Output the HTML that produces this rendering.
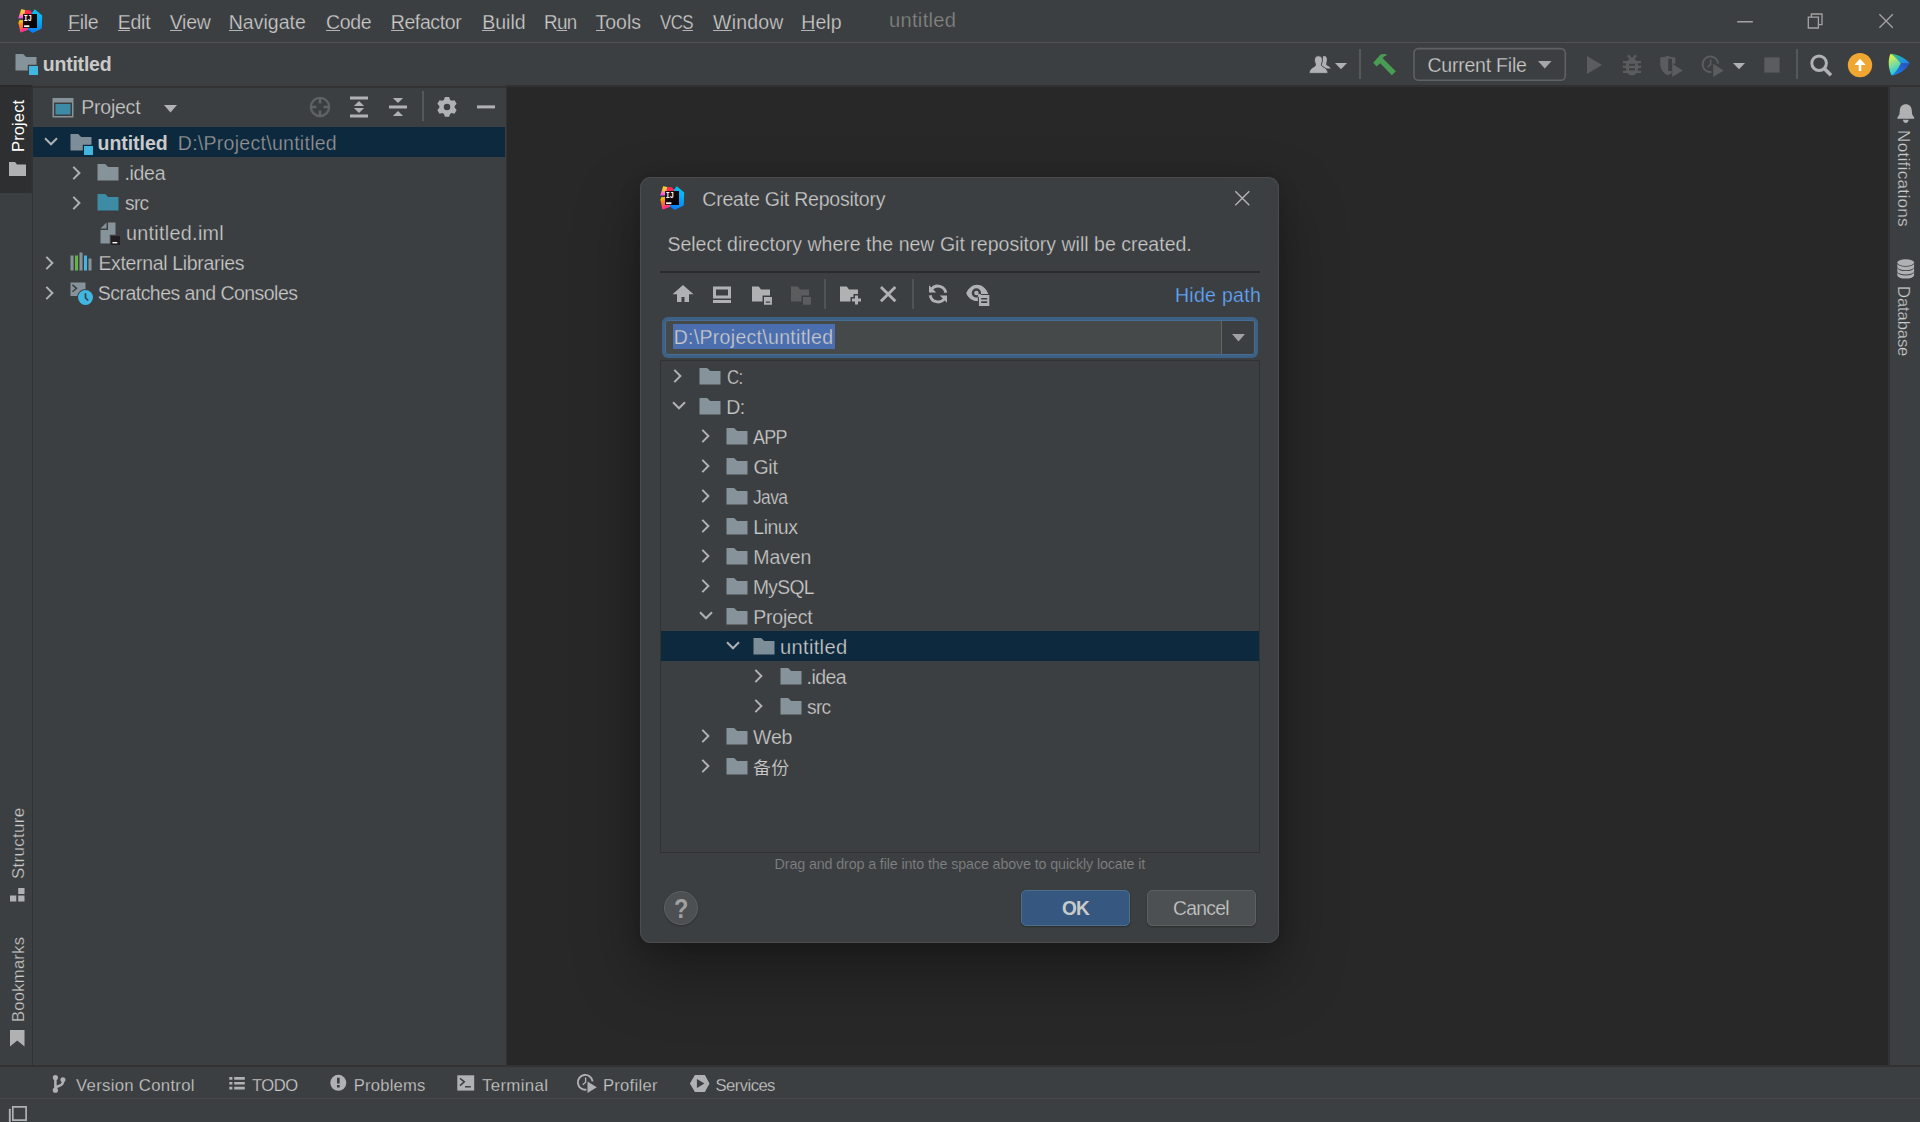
<!DOCTYPE html>
<html lang="en"><head><meta charset="utf-8"><title>untitled</title>
<style>
html,body{margin:0;padding:0;}
body{width:1920px;height:1122px;overflow:hidden;background:#3c3f41;font-family:'Liberation Sans','Noto Sans CJK SC',sans-serif;position:relative;}
#r{position:absolute;left:0;top:0;width:1920px;height:1122px;overflow:hidden;}
#r div,#r svg,#r span.t{position:absolute;}
#r div{box-sizing:border-box;}
span.t{line-height:1;white-space:pre;}
span.t u{text-decoration:none;background:linear-gradient(#b4b4b4,#b4b4b4) 0 calc(0.905em + 1px)/100% 1px no-repeat;}
svg{overflow:visible;}
svg text{font-family:'Liberation Mono',monospace;}
</style></head><body><div id="r">
<div style="left:0px;top:42px;width:1920px;height:1px;background:#515151;"></div>
<div style="left:0px;top:85px;width:1920px;height:2px;background:#323232;"></div>
<div style="left:33px;top:85px;width:473px;height:1px;background:#3c3f41;"></div>
<div style="left:33px;top:86px;width:473px;height:2px;background:#323232;"></div>
<div style="left:0px;top:85px;width:32px;height:2px;background:#2a2a2a;"></div>
<div style="left:507px;top:87px;width:1381px;height:978px;background:#282828;"></div>
<div style="left:506px;top:87px;width:1px;height:978px;background:#313131;"></div>
<div style="left:507px;top:85px;width:1381px;height:2px;background:#313131;"></div>
<div style="left:32px;top:87px;width:1px;height:978px;background:#323232;"></div>
<div style="left:0px;top:87px;width:31px;height:106px;background:#2d2f30;"></div>
<div style="left:31px;top:87px;width:1px;height:106px;background:#303233;"></div>
<div style="left:1888px;top:87px;width:2px;height:978px;background:#323232;"></div>
<div style="left:1887px;top:87px;width:1px;height:978px;background:#272727;"></div>
<div style="left:0px;top:1065px;width:1920px;height:2px;background:#323232;"></div>
<div style="left:0px;top:1098px;width:1920px;height:1px;background:#474746;"></div>
<svg style="left:18px;top:9px;" width="24" height="24" viewBox="0 0 24 24">
<defs>
<linearGradient id="lg1_18" x1="0.3" y1="0" x2="0.2" y2="1"><stop offset="0" stop-color="#fdd835"/><stop offset="0.45" stop-color="#fdb052"/><stop offset="0.8" stop-color="#ff5fd8"/><stop offset="1" stop-color="#f04bdc"/></linearGradient>
<linearGradient id="lg2_18" x1="0.6" y1="0" x2="0.4" y2="1"><stop offset="0" stop-color="#07c3f2"/><stop offset="0.35" stop-color="#0ab0f8"/><stop offset="1" stop-color="#087cfa"/></linearGradient>
<linearGradient id="lg3_18" x1="0.3" y1="0" x2="0.5" y2="1"><stop offset="0" stop-color="#fdd20d"/><stop offset="0.35" stop-color="#fc801d"/><stop offset="0.75" stop-color="#fe4a6a"/><stop offset="1" stop-color="#ff318c"/></linearGradient>
<linearGradient id="lg4_18" x1="0" y1="0" x2="1" y2="1"><stop offset="0" stop-color="#2a0e0a"/><stop offset="0.6" stop-color="#0a0508"/><stop offset="1" stop-color="#000"/></linearGradient>
</defs>
<path d="M3.2 0.2L7.4 0.9L8 6L5.4 9.2L0.2 9.6Z" fill="url(#lg1_18)"/>
<path d="M7.2 1L12 1.2L14.2 4.2L10 7L6.5 5Z" fill="#fe2857"/>
<path d="M0.4 13.8L1.4 11.2L6 11L10.5 20.5L2.4 23.6Z" fill="url(#lg3_18)"/>
<path d="M2.4 23.6L4.4 19.4L10.5 20.5Z" fill="#ff318c"/>
<path d="M16.7 0.2L24.2 6.4L23.7 19.6L14.6 24L10 20.5L14 4Z" fill="url(#lg2_18)"/>
<rect x="5" y="5" width="14" height="14" fill="url(#lg4_18)"/>
<rect x="6.1" y="16.3" width="5.3" height="1.8" fill="#fff"/>
<text transform="translate(5.7 12.15) scale(0.74 1)" font-size="9.3" font-weight="700" fill="#fff" style="font-family:'Liberation Mono',monospace">IJ</text>
</svg>
<span class="t" style="font-size:19.5px;color:#cacaca;letter-spacing:-0.267px;-webkit-text-stroke:0.25px #3c3f41;left:68.00px;top:13.00px;"><u>F</u>ile</span>
<span class="t" style="font-size:19.5px;color:#cacaca;letter-spacing:-0.233px;-webkit-text-stroke:0.25px #3c3f41;left:117.70px;top:13.00px;"><u>E</u>dit</span>
<span class="t" style="font-size:19.5px;color:#cacaca;letter-spacing:-0.233px;-webkit-text-stroke:0.25px #3c3f41;left:169.70px;top:13.00px;"><u>V</u>iew</span>
<span class="t" style="font-size:19.5px;color:#cacaca;letter-spacing:0.014px;-webkit-text-stroke:0.25px #3c3f41;left:228.70px;top:13.00px;"><u>N</u>avigate</span>
<span class="t" style="font-size:19.5px;color:#cacaca;letter-spacing:-0.333px;-webkit-text-stroke:0.25px #3c3f41;left:326.00px;top:13.00px;"><u>C</u>ode</span>
<span class="t" style="font-size:19.5px;color:#cacaca;letter-spacing:-0.386px;-webkit-text-stroke:0.25px #3c3f41;left:390.70px;top:13.00px;"><u>R</u>efactor</span>
<span class="t" style="font-size:19.5px;color:#cacaca;letter-spacing:0.025px;-webkit-text-stroke:0.25px #3c3f41;left:482.20px;top:13.00px;"><u>B</u>uild</span>
<span class="t" style="font-size:19.5px;color:#cacaca;letter-spacing:-0.700px;-webkit-text-stroke:0.25px #3c3f41;left:544.04px;top:13.00px;transform-origin:0 0;transform:scaleX(0.9632);">R<u>u</u>n</span>
<span class="t" style="font-size:19.5px;color:#cacaca;-webkit-text-stroke:0.25px #3c3f41;left:595.50px;top:13.00px;"><u>T</u>ools</span>
<span class="t" style="font-size:19.5px;color:#cacaca;letter-spacing:-0.700px;-webkit-text-stroke:0.25px #3c3f41;left:660.30px;top:13.00px;transform-origin:0 0;transform:scaleX(0.8653);">VC<u>S</u></span>
<span class="t" style="font-size:19.5px;color:#cacaca;letter-spacing:0.180px;-webkit-text-stroke:0.25px #3c3f41;left:713.10px;top:13.00px;"><u>W</u>indow</span>
<span class="t" style="font-size:19.5px;color:#cacaca;letter-spacing:0.100px;-webkit-text-stroke:0.25px #3c3f41;left:801.20px;top:13.00px;"><u>H</u>elp</span>
<span class="t" style="font-size:19.5px;color:#858585;letter-spacing:0.300px;-webkit-text-stroke:0.25px #3c3f41;left:888.70px;top:11.00px;transform-origin:0 0;transform:scaleX(1.0307);">untitled</span>
<svg style="left:1737px;top:20px;" width="16" height="4" viewBox="0 0 16 4"><rect x="0.2" y="1" width="15.6" height="1.5" fill="#a3a3a3"/></svg>
<svg style="left:1806px;top:13px;" width="18" height="17" viewBox="0 0 18 17"><path d="M2.3 4.1H12.4V15H2.3Z M5.4 4.1V1H16V11.6H12.4" fill="none" stroke="#a3a3a3" stroke-width="1.3"/></svg>
<svg style="left:1879px;top:14px;" width="15" height="15" viewBox="0 0 15 15"><path d="M0.4 0.3L13.8 13.8M13.8 0.3L0.4 13.8" fill="none" stroke="#a3a3a3" stroke-width="1.3"/></svg>
<svg style="left:14px;top:51px;" width="24" height="24" viewBox="0 0 16 16"><path d="M1 2H6.1L8.1 4H15V9.2H9.2V13H1Z" fill="#87939a"/><rect x="10" y="10" width="6" height="6" fill="#40b6e0"/></svg>
<span class="t" style="font-size:19.5px;color:#cacaca;letter-spacing:-0.229px;font-weight:700;left:42.80px;top:55.00px;">untitled</span>
<span class="t" style="font-size:16.6px;color:#ffffff;letter-spacing:0.083px;left:11.00px;top:152.20px;transform-origin:0 0;transform:rotate(-90deg);">Project</span>
<svg style="left:9px;top:162px;" width="17" height="14" viewBox="0 0 17 14"><path d="M0 0H6L8 2.5H17V14H0Z" fill="#afb1b3"/></svg>
<span class="t" style="font-size:16.6px;color:#cacaca;letter-spacing:0.300px;-webkit-text-stroke:0.25px #3c3f41;left:11.00px;top:879.22px;transform-origin:0 0;transform:rotate(-90deg) scaleX(1.0205);">Structure</span>
<svg style="left:10px;top:888px;" width="15" height="14" viewBox="0 0 15 14"><path d="M8.2 0H14.5V6H8.2Z M0 7.5H6.3V13.5H0Z M8.2 7.5H14.5V13.5H8.2Z" fill="#afb1b3"/></svg>
<span class="t" style="font-size:16.6px;color:#cacaca;letter-spacing:0.250px;-webkit-text-stroke:0.25px #3c3f41;left:11.00px;top:1022.00px;transform-origin:0 0;transform:rotate(-90deg);">Bookmarks</span>
<svg style="left:10px;top:1030px;" width="15" height="17" viewBox="0 0 15 17"><path d="M0 0H14.5V16.5L7.25 10.5L0 16.5Z" fill="#afb1b3"/></svg>
<span class="t" style="font-size:16.6px;color:#cacaca;letter-spacing:0.300px;-webkit-text-stroke:0.25px #3c3f41;left:1910.80px;top:129.77px;transform-origin:0 0;transform:rotate(90deg) scaleX(1.0281);">Notifications</span>
<span class="t" style="font-size:16.6px;color:#cacaca;letter-spacing:-0.100px;-webkit-text-stroke:0.25px #3c3f41;left:1910.80px;top:285.90px;transform-origin:0 0;transform:rotate(90deg);">Database</span>
<svg style="left:51px;top:95px;" width="24" height="24" viewBox="0 0 16 16"><path d="M1 2H15V15H1Z M2 5V14H14V5Z" fill="#87939a" fill-rule="evenodd"/><rect x="3" y="6" width="10" height="7" fill="#3d8ba5"/></svg>
<span class="t" style="font-size:19.5px;color:#cacaca;letter-spacing:-0.217px;-webkit-text-stroke:0.25px #3c3f41;left:81.20px;top:97.80px;">Project</span>
<svg style="left:164.2px;top:104.8px;" width="13" height="7.5" viewBox="0 0 13 7.5"><path d="M0 0H13L6.5 7.5Z" fill="#afb1b3"/></svg>
<svg style="left:308px;top:95px;" width="24" height="24" viewBox="0 0 16 16"><circle cx="8" cy="7.95" r="6.1" fill="none" stroke="#606365" stroke-width="1.5"/><path d="M8 1.3V5.6M8 10.3V14.6M1.3 7.95H5.6M10.4 7.95H14.7" stroke="#606365" stroke-width="1.7" fill="none"/></svg>
<svg style="left:347px;top:95px;" width="24" height="24" viewBox="0 0 16 16"><path d="M2 1H14V3H2Z M2 13H14V15H2Z M8 4L11.4 7.4H4.6Z M8 12L4.6 8.6H11.4Z" fill="#afb1b3"/></svg>
<svg style="left:386px;top:95px;" width="24" height="24" viewBox="0 0 16 16"><path d="M2 7H14V9H2Z M8 5.4L4.6 2H11.4Z M8 10.6L11.4 14H4.6Z" fill="#afb1b3"/></svg>
<div style="left:422px;top:91px;width:2px;height:30px;background:#555759;"></div>
<svg style="left:477px;top:105px;" width="18" height="4" viewBox="0 0 18 4"><rect x="0" y="0.4" width="18" height="3" fill="#afb1b3"/></svg>
<div style="left:33px;top:127px;width:472px;height:30px;background:#0d293e;"></div>
<svg style="left:38.699999999999996px;top:129.6px;" width="24" height="24" viewBox="0 0 24 24"><path d="M6 8.3L12 14.3L18 8.3" fill="none" stroke="#afb1b3" stroke-width="2"/></svg>
<svg style="left:69px;top:131px;" width="24" height="24" viewBox="0 0 16 16"><path d="M1 2H6.1L8.1 4H15V9.2H9.2V13H1Z" fill="#7e8e99"/><rect x="10" y="10" width="6" height="6" fill="#40b6e0"/></svg>
<span class="t" style="font-size:19.5px;color:#cacaca;letter-spacing:-0.029px;font-weight:700;left:97.50px;top:134.00px;">untitled</span>
<span class="t" style="font-size:19.5px;color:#939393;letter-spacing:0.278px;-webkit-text-stroke:0.25px #0d293e;left:177.80px;top:134.00px;">D:\Project\untitled</span>
<svg style="left:65.3px;top:160.8px;" width="24" height="24" viewBox="0 0 24 24"><path d="M8.3 5.9L14.4 12L8.3 18.1" fill="none" stroke="#afb1b3" stroke-width="2"/></svg>
<svg style="left:96px;top:161px;" width="24" height="24" viewBox="0 0 16 16"><path d="M1 2H6.1L8.1 4H15V13H1Z" fill="#87939a"/></svg>
<span class="t" style="font-size:19.5px;color:#cacaca;letter-spacing:-0.325px;-webkit-text-stroke:0.25px #3c3f41;left:124.50px;top:164.00px;">.idea</span>
<svg style="left:65.3px;top:190.8px;" width="24" height="24" viewBox="0 0 24 24"><path d="M8.3 5.9L14.4 12L8.3 18.1" fill="none" stroke="#afb1b3" stroke-width="2"/></svg>
<svg style="left:96px;top:191px;" width="24" height="24" viewBox="0 0 16 16"><path d="M1 2H6.1L8.1 4H15V13H1Z" fill="#3d8ba5"/></svg>
<span class="t" style="font-size:19.5px;color:#cacaca;letter-spacing:-0.700px;-webkit-text-stroke:0.25px #3c3f41;left:125.20px;top:194.00px;transform-origin:0 0;transform:scaleX(0.9837);">src</span>
<svg style="left:96px;top:221px;" width="24" height="24" viewBox="0 0 16 16"><path d="M7 1L3 5H7Z" fill="#87939a"/><path d="M8 1H13V9.2H9.2V15H3V6H8Z" fill="#87939a"/><rect x="10" y="10" width="6" height="6" fill="#231f20"/><rect x="11" y="14" width="3.2" height="0.9" fill="#fff"/></svg>
<span class="t" style="font-size:19.5px;color:#cacaca;letter-spacing:0.300px;-webkit-text-stroke:0.25px #3c3f41;left:125.75px;top:224.00px;transform-origin:0 0;transform:scaleX(1.0125);">untitled.iml</span>
<svg style="left:38.3px;top:250.8px;" width="24" height="24" viewBox="0 0 24 24"><path d="M8.3 5.9L14.4 12L8.3 18.1" fill="none" stroke="#afb1b3" stroke-width="2"/></svg>
<svg style="left:69px;top:251px;" width="24" height="24" viewBox="0 0 16 16"><path d="M1 3H3V13H1Z M7 1H9V13H7Z M13 5H15V13H13Z" fill="#87939a"/><rect x="4" y="3" width="2" height="10" fill="#62b543"/><rect x="10" y="3" width="2" height="10" fill="#40b6e0"/></svg>
<span class="t" style="font-size:19.5px;color:#cacaca;letter-spacing:-0.335px;-webkit-text-stroke:0.25px #3c3f41;left:98.40px;top:254.00px;">External Libraries</span>
<svg style="left:38.3px;top:280.8px;" width="24" height="24" viewBox="0 0 24 24"><path d="M8.3 5.9L14.4 12L8.3 18.1" fill="none" stroke="#afb1b3" stroke-width="2"/></svg>
<svg style="left:69px;top:281px;" width="24" height="24" viewBox="0 0 16 16"><path d="M1 1H11V5.4A5.7 5.7 0 0 0 5.4 10H1Z" fill="#87939a"/><path d="M2.3 2.6L5 4.9L2.3 7.2" fill="none" stroke="#3c3f41" stroke-width="1"/><circle cx="11" cy="11" r="5" fill="#40b6e0"/><path d="M11 8.2V11.2L12.8 13" fill="none" stroke="#231f20" stroke-width="1.1" stroke-opacity="0.75"/></svg>
<span class="t" style="font-size:19.5px;color:#cacaca;letter-spacing:-0.533px;-webkit-text-stroke:0.25px #3c3f41;left:97.80px;top:284.00px;">Scratches and Consoles</span>
<span class="t" style="font-size:16.6px;color:#cacaca;letter-spacing:0.300px;-webkit-text-stroke:0.25px #3c3f41;left:75.50px;top:1078.00px;transform-origin:0 0;transform:scaleX(1.0077);">Version Control</span>
<span class="t" style="font-size:16.6px;color:#cacaca;letter-spacing:-0.467px;-webkit-text-stroke:0.25px #3c3f41;left:252.00px;top:1078.00px;">TODO</span>
<span class="t" style="font-size:16.6px;color:#cacaca;letter-spacing:0.200px;-webkit-text-stroke:0.25px #3c3f41;left:353.80px;top:1078.00px;">Problems</span>
<span class="t" style="font-size:16.6px;color:#cacaca;letter-spacing:0.300px;-webkit-text-stroke:0.25px #3c3f41;left:482.20px;top:1078.00px;transform-origin:0 0;transform:scaleX(1.0172);">Terminal</span>
<span class="t" style="font-size:16.6px;color:#cacaca;letter-spacing:0.300px;-webkit-text-stroke:0.25px #3c3f41;left:602.90px;top:1078.00px;">Profiler</span>
<span class="t" style="font-size:16.6px;color:#cacaca;letter-spacing:-0.543px;-webkit-text-stroke:0.25px #3c3f41;left:715.60px;top:1078.00px;">Services</span>
<svg style="left:1309px;top:55px;" width="22" height="19" viewBox="0 0 22 19"><path d="M14.2 1.2C16.8 0.6 18.2 2.6 17.9 5.2C17.7 7.2 17 8.6 17.2 9.6C17.5 10.9 20.8 11.2 21.8 13.6H15.5L12.5 10.5Z" fill="#afb1b3"/><path d="M9.4 0.8C12.2 0.8 13.6 2.8 13.4 5.4C13.2 7.6 12.3 9 12.4 10.2C12.6 11.8 17.8 12.6 18.6 16.2C18.8 17.2 18.9 18 18.9 18.4H0.2C0.2 18 0.3 17.2 0.5 16.2C1.3 12.6 6.3 11.8 6.5 10.2C6.6 9 5.7 7.6 5.5 5.4C5.3 2.8 6.7 0.8 9.4 0.8Z" fill="#afb1b3" stroke="#3c3f41" stroke-width="0.9"/></svg>
<svg style="left:1335px;top:63px;" width="12" height="6.3" viewBox="0 0 12 6.3"><path d="M0 0H12L6.0 6.3Z" fill="#afb1b3"/></svg>
<div style="left:1359px;top:49px;width:2px;height:30px;background:#555759;"></div>
<svg style="left:1372px;top:53px;" width="25" height="24" viewBox="0 0 25 24"><path d="M1.2 9.8L8.6 1.6C10.4 0.9 12.6 0.9 14.6 1.4L14.8 2.2C13 2.6 11.6 3.6 10.6 5.2L12.2 6.8L23.8 18.2L19.8 22.2L8.2 10.2L4.6 13.6Z" fill="#499c54"/></svg>
<svg style="left:1413px;top:47px;" width="154" height="35" viewBox="0 0 154 35"><rect x="1" y="1.6" width="151.3" height="31.7" rx="4.5" fill="none" stroke="#5f6163" stroke-width="1.6"/></svg>
<span class="t" style="font-size:19.5px;color:#cacaca;letter-spacing:-0.227px;-webkit-text-stroke:0.25px #3c3f41;left:1427.50px;top:55.70px;">Current File</span>
<svg style="left:1538.3px;top:61px;" width="13.6" height="7.6" viewBox="0 0 13.6 7.6"><path d="M0 0H13.6L6.8 7.6Z" fill="#a4a6a8"/></svg>
<svg style="left:1581px;top:53px;" width="24" height="24" viewBox="0 0 16 16"><path d="M4 2L14 8L4 14Z" fill="#5a5c5d"/></svg>
<svg style="left:1620px;top:53px;" width="24" height="24" viewBox="0 0 16 16"><path d="M8 3.6C10.8 3.6 12.1 6 12.1 9C12.1 12.4 10.4 14.9 8 14.9C5.6 14.9 3.9 12.4 3.9 9C3.9 6 5.2 3.6 8 3.6Z M6 7.2V8.6H10V7.2Z M6 10.2V11.6H10V10.2Z" fill="#5a5c5d" fill-rule="evenodd"/><path d="M1.9 6.1H14.1M1.9 9.3H14.1M1.9 12.6H14.1" stroke="#5a5c5d" stroke-width="1.5"/><path d="M5.3 1.6L7.6 4M10.7 1.6L8.4 4" stroke="#5a5c5d" stroke-width="1.5"/></svg>
<svg style="left:1659px;top:55px;" width="25" height="23" viewBox="0 0 25 23"><path d="M8.6 0.8C10.8 1.8 13.4 2.3 16.3 2.4V8.8H13V3.8H9.2V16H12.6V18.2L8.6 20.2C3.6 17.6 1.2 13.6 1.2 8.4V2.4C4 2.3 6.4 1.8 8.6 0.8Z" fill="#5a5c5d"/><path d="M13.2 8.8L23.8 15.4L13.2 22Z" fill="#5a5c5d"/></svg>
<svg style="left:1700px;top:54px;" width="25" height="24" viewBox="0 0 25 24"><path d="M18.2 9.6A7.8 7.8 0 1 0 11.4 18" fill="none" stroke="#5a5c5d" stroke-width="1.9"/><path d="M10.6 5.6V10.4L7.6 13.2" fill="none" stroke="#5a5c5d" stroke-width="1.5"/><path d="M13.2 9.8L23.8 16.4L13.2 23Z" fill="#5a5c5d"/></svg>
<svg style="left:1733px;top:63px;" width="12" height="6.3" viewBox="0 0 12 6.3"><path d="M0 0H12L6.0 6.3Z" fill="#afb1b3"/></svg>
<svg style="left:1764px;top:57px;" width="16" height="16" viewBox="0 0 16 16"><rect x="0.3" y="0.4" width="15.3" height="15.2" fill="#5a5c5d"/></svg>
<div style="left:1796px;top:49px;width:2px;height:30px;background:#555759;"></div>
<svg style="left:1809px;top:53px;" width="24" height="24" viewBox="0 0 24 24"><circle cx="10.1" cy="10.2" r="7.3" fill="none" stroke="#afb1b3" stroke-width="3"/><path d="M15.2 15.4L22 22.2" stroke="#afb1b3" stroke-width="3.6"/></svg>
<svg style="left:1847px;top:52px;" width="26" height="26" viewBox="0 0 26 26"><circle cx="13" cy="13.1" r="12.2" fill="#f0a732"/><path d="M13 6.8L18.7 12.9H14.3V19.1H11.7V12.9H7.3Z" fill="#fff"/></svg>
<svg style="left:1887px;top:53px;" width="24" height="24" viewBox="0 0 24 24"><defs><linearGradient id="cgA" x1="0" y1="0" x2="0.3" y2="1"><stop offset="0" stop-color="#f8f838"/><stop offset="0.5" stop-color="#8fe08a"/><stop offset="1" stop-color="#18c8f0"/></linearGradient>
<linearGradient id="cgB" x1="0" y1="0" x2="1" y2="0.6"><stop offset="0" stop-color="#3fd060"/><stop offset="0.45" stop-color="#20b0b8"/><stop offset="1" stop-color="#2088f0"/></linearGradient>
<linearGradient id="cgC" x1="1" y1="0" x2="0" y2="1"><stop offset="0" stop-color="#2a4cb8"/><stop offset="1" stop-color="#1a88f0"/></linearGradient></defs>
<path d="M3.4 0.8C10.8 1.4 18 4.8 22.8 10.4H13.8C11 6.4 7.6 3 3.4 0.8Z" fill="url(#cgB)"/>
<path d="M22.8 10.4C18.8 16.8 12.4 21 4.6 22.6C8.6 19.4 11.6 15.4 13.8 10.4Z" fill="url(#cgC)"/>
<path d="M3.4 0.8C7.6 3 11 6.4 13.8 10.4C11.6 15.4 8.6 19.4 4.6 22.6C1.4 16 0.6 8 3.4 0.8Z" fill="url(#cgA)"/></svg>
<svg style="left:435px;top:95px;" width="24" height="24" viewBox="0 0 16 16"><path d="M5.99 3.21L6.59 1.35L9.41 1.35L10.01 3.21L11.11 3.84L13.01 3.43L14.42 5.87L13.11 7.32L13.11 8.58L14.42 10.03L13.01 12.47L11.11 12.06L10.01 12.69L9.41 14.55L6.59 14.55L5.99 12.69L4.89 12.06L2.99 12.47L1.58 10.03L2.89 8.58L2.89 7.32L1.58 5.87L2.99 3.43L4.89 3.84Z M10.15 7.95A2.15 2.15 0 1 0 5.85 7.95A2.15 2.15 0 1 0 10.15 7.95Z" fill="#afb1b3" fill-rule="evenodd"/></svg>
<svg style="left:1897px;top:104px;" width="18" height="20" viewBox="0 0 18 20"><path d="M8.8 0.3C12.4 0.3 14.6 2.8 14.8 6.4L15.2 10.6L17.2 13.6V14.8H0.4V13.6L2.4 10.6L2.8 6.4C3 2.8 5.2 0.3 8.8 0.3Z" fill="#afb1b3"/><path d="M6 15.8H11.6C11.6 17.6 10.4 19 8.8 19C7.2 19 6 17.6 6 15.8Z" fill="#afb1b3"/></svg>
<svg style="left:1897px;top:258.6px;" width="18" height="21" viewBox="0 0 18 21"><ellipse cx="8.7" cy="3.6" rx="8.4" ry="3.3" fill="#afb1b3"/><path d="M0.3 4.5A8.4 3.3 0 0 0 17.1 4.5V7.9A8.4 3.3 0 0 1 0.3 7.9Z M0.3 8.8A8.4 3.3 0 0 0 17.1 8.8V12.2A8.4 3.3 0 0 1 0.3 12.2Z M0.3 13.1A8.4 3.3 0 0 0 17.1 13.1V16.3A8.4 3.3 0 0 1 0.3 16.3Z" fill="#afb1b3"/></svg>
<svg style="left:52px;top:1074px;" width="15" height="20" viewBox="0 0 15 20"><circle cx="3.4" cy="3.5" r="2.6" fill="#afb1b3"/><circle cx="10.9" cy="5.8" r="2.5" fill="#afb1b3"/><circle cx="3.4" cy="16.2" r="2.6" fill="#afb1b3"/><path d="M3.4 3.5V16.2M10.9 5.8V8.2C10.9 11.2 7.2 12 3.6 13.2" fill="none" stroke="#afb1b3" stroke-width="2.5"/></svg>
<svg style="left:229px;top:1076px;" width="17" height="14" viewBox="0 0 17 14"><path d="M0.3 1.1H3.4V3.8H0.3Z M5.2 1.1H15.8V3.8H5.2Z M0.3 5.9H3.4V8.6H0.3Z M5.2 5.9H15.8V8.6H5.2Z M0.3 10.7H3.4V13.4H0.3Z M5.2 10.7H15.8V13.4H5.2Z" fill="#afb1b3"/></svg>
<svg style="left:330px;top:1074px;" width="17" height="17" viewBox="0 0 17 17"><circle cx="8.3" cy="8.8" r="8" fill="#afb1b3"/><path d="M7 3.7H9.7V9.5H7Z M7 11H9.7V13.5H7Z" fill="#3c3f41"/></svg>
<svg style="left:457px;top:1075px;" width="18" height="16" viewBox="0 0 18 16"><path d="M0.3 0.3H17.2V15.6H0.3Z" fill="#afb1b3"/><path d="M3 3.3L7.3 6.8L3 10.6" fill="none" stroke="#3c3f41" stroke-width="1.5"/><path d="M8 11.8H13.8" stroke="#3c3f41" stroke-width="1.5"/></svg>
<svg style="left:576px;top:1073px;" width="22" height="21" viewBox="0 0 22 21"><path d="M16.6 8.4A7.4 7.4 0 1 0 10.4 16.6" fill="none" stroke="#afb1b3" stroke-width="1.9"/><path d="M9.6 4.6V9.2L6.8 11.8" fill="none" stroke="#afb1b3" stroke-width="1.4"/><path d="M11.5 8.4L20.8 14.2L11.5 20Z" fill="#afb1b3"/></svg>
<svg style="left:689px;top:1074px;" width="21" height="19" viewBox="0 0 21 19"><path d="M0.9 9.6L5.9 1H15.9L20.5 9.6L15.9 18H5.9Z M7.9 5V14L15.4 9.6Z" fill="#afb1b3" fill-rule="evenodd"/></svg>
<svg style="left:8px;top:1105px;" width="20" height="17" viewBox="0 0 20 17"><path d="M4.8 1.8H18.1V15.2H4.8Z" fill="none" stroke="#afb1b3" stroke-width="1.7"/><path d="M1.8 3.8V17" stroke="#afb1b3" stroke-width="1.9"/></svg>
<div style="left:640px;top:177px;width:639px;height:766px;background:#3c3f41;border-radius:11px;box-shadow:0 0 0 1px #494b4d inset, 0 30px 64px 0 rgba(0,0,0,0.34), 0 3px 20px rgba(0,0,0,0.16);"></div>
<svg style="left:660px;top:186px;" width="24" height="24" viewBox="0 0 24 24">
<defs>
<linearGradient id="lg1_660" x1="0.3" y1="0" x2="0.2" y2="1"><stop offset="0" stop-color="#fdd835"/><stop offset="0.45" stop-color="#fdb052"/><stop offset="0.8" stop-color="#ff5fd8"/><stop offset="1" stop-color="#f04bdc"/></linearGradient>
<linearGradient id="lg2_660" x1="0.6" y1="0" x2="0.4" y2="1"><stop offset="0" stop-color="#07c3f2"/><stop offset="0.35" stop-color="#0ab0f8"/><stop offset="1" stop-color="#087cfa"/></linearGradient>
<linearGradient id="lg3_660" x1="0.3" y1="0" x2="0.5" y2="1"><stop offset="0" stop-color="#fdd20d"/><stop offset="0.35" stop-color="#fc801d"/><stop offset="0.75" stop-color="#fe4a6a"/><stop offset="1" stop-color="#ff318c"/></linearGradient>
<linearGradient id="lg4_660" x1="0" y1="0" x2="1" y2="1"><stop offset="0" stop-color="#2a0e0a"/><stop offset="0.6" stop-color="#0a0508"/><stop offset="1" stop-color="#000"/></linearGradient>
</defs>
<path d="M3.2 0.2L7.4 0.9L8 6L5.4 9.2L0.2 9.6Z" fill="url(#lg1_660)"/>
<path d="M7.2 1L12 1.2L14.2 4.2L10 7L6.5 5Z" fill="#fe2857"/>
<path d="M0.4 13.8L1.4 11.2L6 11L10.5 20.5L2.4 23.6Z" fill="url(#lg3_660)"/>
<path d="M2.4 23.6L4.4 19.4L10.5 20.5Z" fill="#ff318c"/>
<path d="M16.7 0.2L24.2 6.4L23.7 19.6L14.6 24L10 20.5L14 4Z" fill="url(#lg2_660)"/>
<rect x="5" y="5" width="14" height="14" fill="url(#lg4_660)"/>
<rect x="6.1" y="16.3" width="5.3" height="1.8" fill="#fff"/>
<text transform="translate(5.7 12.15) scale(0.74 1)" font-size="9.3" font-weight="700" fill="#fff" style="font-family:'Liberation Mono',monospace">IJ</text>
</svg>
<span class="t" style="font-size:19.5px;color:#cacaca;letter-spacing:-0.215px;-webkit-text-stroke:0.25px #3c3f41;left:702.30px;top:190.00px;">Create Git Repository</span>
<svg style="left:1235px;top:191px;" width="15" height="15" viewBox="0 0 15 15"><path d="M0.3 0.3L14.3 14.3M14.3 0.3L0.3 14.3" fill="none" stroke="#b4b6b7" stroke-width="1.3"/></svg>
<span class="t" style="font-size:19.5px;color:#cacaca;letter-spacing:0.015px;-webkit-text-stroke:0.25px #3c3f41;left:667.40px;top:235.30px;">Select directory where the new Git repository will be created.</span>
<div style="left:660px;top:271px;width:600px;height:2px;background:#2b2b2b;"></div>
<svg style="left:671px;top:282px;" width="24" height="24" viewBox="0 0 16 16"><path d="M8 2L15 8.2H12V13.3H9V10H7V13.3H4V8.2H1Z" fill="#afb1b3"/></svg>
<svg style="left:710px;top:282px;" width="24" height="24" viewBox="0 0 16 16"><path d="M2 3H14V11H2Z M4 5V9H12V5Z M2 12H14V14H2Z" fill="#afb1b3" fill-rule="evenodd"/></svg>
<svg style="left:749px;top:282px;" width="24" height="24" viewBox="0 0 16 16"><path d="M2 3H6.5L8 5H14V9H9V13H2Z" fill="#afb1b3"/><path d="M10 10H15.3V15.2H10Z M11.2 13V13.8H14.1V13Z" fill="#afb1b3" fill-rule="evenodd"/></svg>
<svg style="left:788px;top:282px;" width="24" height="24" viewBox="0 0 16 16"><path d="M2 3H6.5L8 5H14V9H9V13H2Z" fill="#5a5c5d"/><path d="M10 10H15.3V15.2H10Z" fill="#5a5c5d"/></svg>
<div style="left:824px;top:279px;width:2px;height:30px;background:#515456;"></div>
<svg style="left:837px;top:282px;" width="24" height="24" viewBox="0 0 16 16"><path d="M2 3H6.5L8 5H14V8H11V10H9V13H2Z" fill="#afb1b3"/><path d="M12 9H14V11H16V13H14V15H12V13H10V11H12Z" fill="#afb1b3"/></svg>
<svg style="left:876px;top:282px;" width="24" height="24" viewBox="0 0 16 16"><path d="M3.3 3.3L12.9 12.9M12.9 3.3L3.3 12.9" fill="none" stroke="#afb1b3" stroke-width="1.9"/></svg>
<div style="left:912px;top:279px;width:2px;height:30px;background:#515456;"></div>
<svg style="left:926px;top:282px;" width="24" height="24" viewBox="0 0 16 16"><path d="M13.2 7.2A5.3 5.3 0 0 0 3.6 5" fill="none" stroke="#afb1b3" stroke-width="1.9"/><path d="M2 2.2V7H6.8Z" fill="#afb1b3"/><path d="M2.8 8.8A5.3 5.3 0 0 0 12.4 11" fill="none" stroke="#afb1b3" stroke-width="1.9"/><path d="M14 13.8V9H9.2Z" fill="#afb1b3"/></svg>
<svg style="left:965px;top:282px;" width="24" height="24" viewBox="0 0 16 16"><path d="M0.8 7.5C2.4 4 5 1.9 8 1.9C11.2 1.9 13.8 4 15.3 7.4V8H8.6V12.7C5 12.9 2.2 10.7 0.8 7.5Z M7.6 4.2A3.1 3.1 0 1 0 7.6 10.4A3.1 3.1 0 1 0 7.6 4.2Z M7.6 5.8A1.5 1.5 0 1 1 7.6 8.8A1.5 1.5 0 1 1 7.6 5.8Z" fill="#afb1b3" fill-rule="evenodd"/><path d="M9.3 8.7H16.2V16H9.3Z M10.8 10.6V11.7H14.8V10.6Z M10.8 12.9V14H14.8V12.9Z" fill="#afb1b3" fill-rule="evenodd"/></svg>
<span class="t" style="font-size:19.5px;color:#62a8ff;letter-spacing:0.300px;-webkit-text-stroke:0.25px #3c3f41;left:1174.90px;top:286.00px;">Hide path</span>
<div style="left:662px;top:317px;width:596px;height:41px;border-radius:6px;background:#3d6185;"></div>
<div style="left:665px;top:320px;width:590px;height:35px;border-radius:3px;background:#45494a;border:1px solid #466d94;"></div>
<div style="left:1222px;top:321px;width:32px;height:33px;background:#3c3f41;border-radius:0 2px 2px 0;"></div>
<div style="left:1221px;top:321px;width:1px;height:33px;background:#646464;"></div>
<div style="left:673px;top:324px;width:162px;height:25px;background:#4b6eaf;"></div>
<span class="t" style="font-size:19.5px;color:#cacaca;letter-spacing:0.300px;-webkit-text-stroke:0.25px #4b6eaf;left:673.70px;top:328.00px;">D:\Project\untitled</span>
<svg style="left:1231.8px;top:334px;" width="13" height="7.5" viewBox="0 0 13 7.5"><path d="M0 0H13L6.5 7.5Z" fill="#9fa1a3"/></svg>
<div style="left:660px;top:360px;width:600px;height:493px;border:1px solid #323232;background:#3c3f41;"></div>
<div style="left:661px;top:631px;width:598px;height:30px;background:#0d293e;"></div>
<svg style="left:666.1px;top:364.2px;" width="24" height="24" viewBox="0 0 24 24"><path d="M8.3 5.9L14.4 12L8.3 18.1" fill="none" stroke="#afb1b3" stroke-width="2"/></svg>
<svg style="left:697.8px;top:365px;" width="24" height="24" viewBox="0 0 16 16"><path d="M1 2H6.1L8.1 4H15V13H1Z" fill="#87939a"/></svg>
<span class="t" style="font-size:19.5px;color:#cacaca;letter-spacing:-0.700px;-webkit-text-stroke:0.25px #3c3f41;left:726.70px;top:368.00px;transform-origin:0 0;transform:scaleX(0.8613);">C:</span>
<svg style="left:667.2px;top:393.8px;" width="24" height="24" viewBox="0 0 24 24"><path d="M6 8.3L12 14.3L18 8.3" fill="none" stroke="#afb1b3" stroke-width="2"/></svg>
<svg style="left:697.8px;top:395px;" width="24" height="24" viewBox="0 0 16 16"><path d="M1 2H6.1L8.1 4H15V13H1Z" fill="#87939a"/></svg>
<span class="t" style="font-size:19.5px;color:#cacaca;letter-spacing:-0.600px;-webkit-text-stroke:0.25px #3c3f41;left:726.20px;top:398.00px;">D:</span>
<svg style="left:694.1px;top:424.2px;" width="24" height="24" viewBox="0 0 24 24"><path d="M8.3 5.9L14.4 12L8.3 18.1" fill="none" stroke="#afb1b3" stroke-width="2"/></svg>
<svg style="left:724.5px;top:425px;" width="24" height="24" viewBox="0 0 16 16"><path d="M1 2H6.1L8.1 4H15V13H1Z" fill="#87939a"/></svg>
<span class="t" style="font-size:19.5px;color:#cacaca;letter-spacing:-0.700px;-webkit-text-stroke:0.25px #3c3f41;left:753.10px;top:428.00px;transform-origin:0 0;transform:scaleX(0.9176);">APP</span>
<svg style="left:694.1px;top:454.2px;" width="24" height="24" viewBox="0 0 24 24"><path d="M8.3 5.9L14.4 12L8.3 18.1" fill="none" stroke="#afb1b3" stroke-width="2"/></svg>
<svg style="left:724.5px;top:455px;" width="24" height="24" viewBox="0 0 16 16"><path d="M1 2H6.1L8.1 4H15V13H1Z" fill="#87939a"/></svg>
<span class="t" style="font-size:19.5px;color:#cacaca;letter-spacing:-0.200px;-webkit-text-stroke:0.25px #3c3f41;left:753.40px;top:458.00px;">Git</span>
<svg style="left:694.1px;top:484.2px;" width="24" height="24" viewBox="0 0 24 24"><path d="M8.3 5.9L14.4 12L8.3 18.1" fill="none" stroke="#afb1b3" stroke-width="2"/></svg>
<svg style="left:724.5px;top:485px;" width="24" height="24" viewBox="0 0 16 16"><path d="M1 2H6.1L8.1 4H15V13H1Z" fill="#87939a"/></svg>
<span class="t" style="font-size:19.5px;color:#cacaca;letter-spacing:-0.700px;-webkit-text-stroke:0.25px #3c3f41;left:753.10px;top:488.00px;transform-origin:0 0;transform:scaleX(0.8922);">Java</span>
<svg style="left:694.1px;top:514.2px;" width="24" height="24" viewBox="0 0 24 24"><path d="M8.3 5.9L14.4 12L8.3 18.1" fill="none" stroke="#afb1b3" stroke-width="2"/></svg>
<svg style="left:724.5px;top:515px;" width="24" height="24" viewBox="0 0 16 16"><path d="M1 2H6.1L8.1 4H15V13H1Z" fill="#87939a"/></svg>
<span class="t" style="font-size:19.5px;color:#cacaca;letter-spacing:-0.500px;-webkit-text-stroke:0.25px #3c3f41;left:753.30px;top:518.00px;">Linux</span>
<svg style="left:694.1px;top:544.2px;" width="24" height="24" viewBox="0 0 24 24"><path d="M8.3 5.9L14.4 12L8.3 18.1" fill="none" stroke="#afb1b3" stroke-width="2"/></svg>
<svg style="left:724.5px;top:545px;" width="24" height="24" viewBox="0 0 16 16"><path d="M1 2H6.1L8.1 4H15V13H1Z" fill="#87939a"/></svg>
<span class="t" style="font-size:19.5px;color:#cacaca;letter-spacing:-0.150px;-webkit-text-stroke:0.25px #3c3f41;left:753.30px;top:548.00px;">Maven</span>
<svg style="left:694.1px;top:574.2px;" width="24" height="24" viewBox="0 0 24 24"><path d="M8.3 5.9L14.4 12L8.3 18.1" fill="none" stroke="#afb1b3" stroke-width="2"/></svg>
<svg style="left:724.5px;top:575px;" width="24" height="24" viewBox="0 0 16 16"><path d="M1 2H6.1L8.1 4H15V13H1Z" fill="#87939a"/></svg>
<span class="t" style="font-size:19.5px;color:#cacaca;letter-spacing:-0.700px;-webkit-text-stroke:0.25px #3c3f41;left:753.31px;top:578.00px;transform-origin:0 0;transform:scaleX(0.9869);">MySQL</span>
<svg style="left:694.0px;top:603.8px;" width="24" height="24" viewBox="0 0 24 24"><path d="M6 8.3L12 14.3L18 8.3" fill="none" stroke="#afb1b3" stroke-width="2"/></svg>
<svg style="left:724.5px;top:605px;" width="24" height="24" viewBox="0 0 16 16"><path d="M1 2H6.1L8.1 4H15V13H1Z" fill="#87939a"/></svg>
<span class="t" style="font-size:19.5px;color:#cacaca;letter-spacing:-0.217px;-webkit-text-stroke:0.25px #3c3f41;left:753.30px;top:608.00px;">Project</span>
<svg style="left:720.9px;top:633.8px;" width="24" height="24" viewBox="0 0 24 24"><path d="M6 8.3L12 14.3L18 8.3" fill="none" stroke="#afb1b3" stroke-width="2"/></svg>
<svg style="left:751.6px;top:635px;" width="24" height="24" viewBox="0 0 16 16"><path d="M1 2H6.1L8.1 4H15V13H1Z" fill="#7e8e99"/></svg>
<span class="t" style="font-size:19.5px;color:#cacaca;letter-spacing:0.300px;-webkit-text-stroke:0.25px #0d293e;left:780.20px;top:638.00px;transform-origin:0 0;transform:scaleX(1.0323);">untitled</span>
<svg style="left:746.9px;top:664.2px;" width="24" height="24" viewBox="0 0 24 24"><path d="M8.3 5.9L14.4 12L8.3 18.1" fill="none" stroke="#afb1b3" stroke-width="2"/></svg>
<svg style="left:778.7px;top:665px;" width="24" height="24" viewBox="0 0 16 16"><path d="M1 2H6.1L8.1 4H15V13H1Z" fill="#87939a"/></svg>
<span class="t" style="font-size:19.5px;color:#cacaca;letter-spacing:-0.550px;-webkit-text-stroke:0.25px #3c3f41;left:806.60px;top:668.00px;">.idea</span>
<svg style="left:746.9px;top:694.2px;" width="24" height="24" viewBox="0 0 24 24"><path d="M8.3 5.9L14.4 12L8.3 18.1" fill="none" stroke="#afb1b3" stroke-width="2"/></svg>
<svg style="left:778.7px;top:695px;" width="24" height="24" viewBox="0 0 16 16"><path d="M1 2H6.1L8.1 4H15V13H1Z" fill="#87939a"/></svg>
<span class="t" style="font-size:19.5px;color:#cacaca;letter-spacing:-0.700px;-webkit-text-stroke:0.25px #3c3f41;left:807.10px;top:698.00px;transform-origin:0 0;transform:scaleX(0.9837);">src</span>
<svg style="left:694.1px;top:724.2px;" width="24" height="24" viewBox="0 0 24 24"><path d="M8.3 5.9L14.4 12L8.3 18.1" fill="none" stroke="#afb1b3" stroke-width="2"/></svg>
<svg style="left:724.5px;top:725px;" width="24" height="24" viewBox="0 0 16 16"><path d="M1 2H6.1L8.1 4H15V13H1Z" fill="#87939a"/></svg>
<span class="t" style="font-size:19.5px;color:#cacaca;letter-spacing:-0.200px;-webkit-text-stroke:0.25px #3c3f41;left:753.10px;top:728.00px;">Web</span>
<svg style="left:694.1px;top:754.2px;" width="24" height="24" viewBox="0 0 24 24"><path d="M8.3 5.9L14.4 12L8.3 18.1" fill="none" stroke="#afb1b3" stroke-width="2"/></svg>
<svg style="left:724.5px;top:755px;" width="24" height="24" viewBox="0 0 16 16"><path d="M1 2H6.1L8.1 4H15V13H1Z" fill="#87939a"/></svg>
<span class="t" style="font-size:16.6px;color:#cacaca;letter-spacing:0.300px;-webkit-text-stroke:0.15px #3c3f41;font-family:'Noto Sans CJK SC',sans-serif;left:753.10px;top:758.50px;transform-origin:0 0;transform:scaleX(1.0781);">备份</span>
<span class="t" style="font-size:14.3px;color:#808284;letter-spacing:-0.126px;-webkit-text-stroke:0.15px #3c3f41;left:774.60px;top:857.00px;">Drag and drop a file into the space above to quickly locate it</span>
<div style="left:664px;top:891px;width:34px;height:34px;border-radius:17px;background:#4c5052;border:1px solid #5e6060;box-shadow:0 1px 2px rgba(0,0,0,0.25);"></div>
<span class="t" style="font-size:27px;color:#a0a1a2;font-weight:700;left:673.63px;top:895.60px;transform-origin:0 0;transform:scaleX(0.8733);">?</span>
<div style="left:1021px;top:890px;width:109px;height:36px;border-radius:5px;background:#365880;border:1px solid #4c708c;box-shadow:0 1px 2px rgba(0,0,0,0.3);"></div>
<span class="t" style="font-size:19.5px;color:#cacaca;letter-spacing:-0.700px;font-weight:700;left:1062.40px;top:899.00px;transform-origin:0 0;transform:scaleX(0.9753);">OK</span>
<div style="left:1147px;top:890px;width:109px;height:36px;border-radius:5px;background:#4c5052;border:1px solid #5e6060;box-shadow:0 1px 2px rgba(0,0,0,0.3);"></div>
<span class="t" style="font-size:19.5px;color:#cacaca;letter-spacing:-0.700px;-webkit-text-stroke:0.25px #4c5052;left:1173.30px;top:899.00px;transform-origin:0 0;transform:scaleX(0.9894);">Cancel</span>
</div></body></html>
